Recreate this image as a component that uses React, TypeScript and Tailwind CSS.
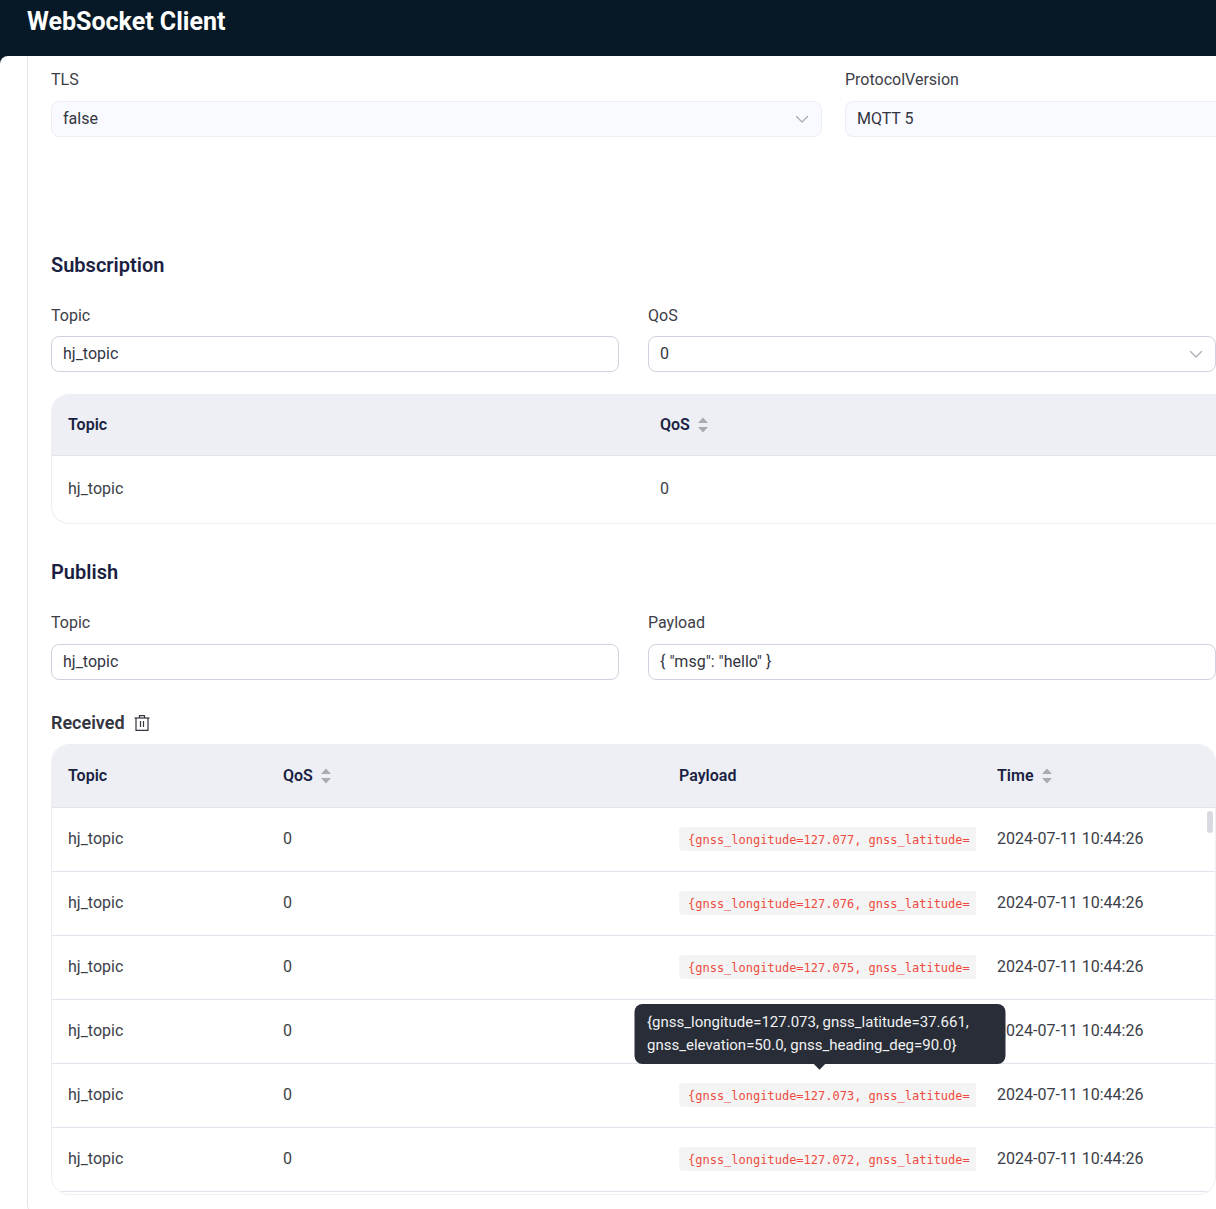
import { useState } from "react";

const subscriptions = [{ topic: "hj_topic", qos: 0 }];

const messages = [
  { id: 1, longitude: "127.077" },
  { id: 2, longitude: "127.076" },
  { id: 3, longitude: "127.075" },
  { id: 4, longitude: "" },
  { id: 5, longitude: "127.073" },
  { id: 6, longitude: "127.072" },
];

const inputClass =
  "block w-full h-9 border border-[#d0d3dd] rounded-lg bg-white px-[11px] text-base text-[#33353f] focus:outline-none";
const labelClass = "block text-base leading-6 text-[#3c3e47]";
const headingClass = "text-xl leading-7 font-semibold text-[#1b1f42]";
const thClass = "px-4 text-left font-semibold text-[#1b1f42]";

function Chevron() {
  return (
    <svg
      viewBox="0 0 14 14"
      className="pointer-events-none absolute right-[13px] top-[11px] h-[14px] w-[14px]"
      fill="none"
      stroke="#a9abb3"
      strokeWidth="1.2"
      strokeLinecap="round"
      strokeLinejoin="round"
    >
      <path d="M1.5 4.5 7 10l5.5-5.5" />
    </svg>
  );
}

function SortHeader({ label }: { label: string }) {
  return (
    <button type="button" className="flex items-center gap-2 font-semibold">
      {label}
      <svg viewBox="0 0 10 16" className="h-4 w-[10px]" fill="#a8abb2">
        <path d="M5 0.5 10 6H0z" />
        <path d="M5 15.5 0 10h10z" />
      </svg>
    </button>
  );
}

function TrashIcon() {
  return (
    <svg
      viewBox="0 0 16 16"
      className="h-4 w-4"
      fill="none"
      stroke="#33353f"
      strokeWidth="1.2"
    >
      <path d="M0.5 3h15" />
      <path d="M5.5 3V0.6h5V3" />
      <path d="M2 3v12.4h12V3" />
      <path d="M6.5 6v6M9.5 6v6" />
    </svg>
  );
}

export default function App() {
  const [tls, setTls] = useState("false");
  const [version, setVersion] = useState("MQTT 5");
  const [subTopic, setSubTopic] = useState("hj_topic");
  const [subQos, setSubQos] = useState("0");
  const [pubTopic, setPubTopic] = useState("hj_topic");
  const [payload, setPayload] = useState('{ "msg": "hello" }');
  const activeId = 5;

  return (
    <div className="flex h-screen flex-col overflow-hidden bg-[#071926] font-['Roboto','Liberation_Sans',sans-serif] text-base text-[#3c3e47]">
      <header className="h-14 shrink-0 px-[27px] pt-[6px]">
        <h1 className="text-[25px] leading-8 font-bold text-white">WebSocket Client</h1>
      </header>

      <main className="min-h-0 flex-1 overflow-hidden rounded-tl-lg bg-white pl-[27px]">
        <section className="rounded-bl-xl border-b border-l border-[#e3e3ee] pb-5 pl-[23px]">
          <div className="grid grid-cols-[771fr_371fr] gap-x-[23px] pt-3">
            <div>
              <label htmlFor="tls" className={labelClass}>
                TLS
              </label>
              <div className="relative mt-[9px]">
                <select
                  id="tls"
                  value={tls}
                  onChange={(e) => setTls(e.target.value)}
                  className="block h-9 w-full appearance-none rounded-lg border border-[#ededf5] bg-[#f9faff] px-[11px] text-[#33353f]"
                >
                  <option>false</option>
                  <option>true</option>
                </select>
                <Chevron />
              </div>
            </div>
            <div>
              <label htmlFor="version" className={labelClass}>
                ProtocolVersion
              </label>
              <select
                id="version"
                value={version}
                onChange={(e) => setVersion(e.target.value)}
                className="mt-[9px] block h-9 w-full appearance-none rounded-l-lg border border-r-0 border-[#ededf5] bg-[#f9faff] px-[11px] text-[#33353f]"
              >
                <option>MQTT 5</option>
                <option>MQTT 3.1.1</option>
              </select>
            </div>
          </div>

          <h2 className={`mt-[114px] ${headingClass}`}>Subscription</h2>
          <div className="mt-[25px] grid grid-cols-2 gap-x-[29px]">
            <div>
              <label htmlFor="sub-topic" className={labelClass}>
                Topic
              </label>
              <input
                id="sub-topic"
                type="text"
                value={subTopic}
                onChange={(e) => setSubTopic(e.target.value)}
                className={`mt-2 pb-[2px] ${inputClass}`}
              />
            </div>
            <div>
              <label htmlFor="sub-qos" className={labelClass}>
                QoS
              </label>
              <div className="relative mt-2">
                <select
                  id="sub-qos"
                  value={subQos}
                  onChange={(e) => setSubQos(e.target.value)}
                  className={`appearance-none ${inputClass}`}
                >
                  <option>0</option>
                  <option>1</option>
                  <option>2</option>
                </select>
                <Chevron />
              </div>
            </div>
          </div>

          <div className="mt-[22px] overflow-hidden rounded-l-[18px] border border-r-0 border-[#edeff5]">
            <table className="w-full table-fixed">
              <thead>
                <tr className="h-[60px] border-b border-[#e3e3ee] bg-[#edeff5]">
                  <th className={`w-[592px] ${thClass}`}>Topic</th>
                  <th className={thClass}>
                    <SortHeader label="QoS" />
                  </th>
                </tr>
              </thead>
              <tbody>
                {subscriptions.map((s) => (
                  <tr key={s.topic} className="h-[68px]">
                    <td className="px-4">{s.topic}</td>
                    <td className="px-4">{s.qos}</td>
                  </tr>
                ))}
              </tbody>
            </table>
          </div>

          <h2 className={`mt-[34px] ${headingClass}`}>Publish</h2>
          <div className="mt-[25px] grid grid-cols-2 gap-x-[29px]">
            <div>
              <label htmlFor="pub-topic" className={labelClass}>
                Topic
              </label>
              <input
                id="pub-topic"
                type="text"
                value={pubTopic}
                onChange={(e) => setPubTopic(e.target.value)}
                className={`mt-[9px] pb-[2px] ${inputClass}`}
              />
            </div>
            <div>
              <label htmlFor="payload" className={labelClass}>
                Payload
              </label>
              <input
                id="payload"
                type="text"
                value={payload}
                onChange={(e) => setPayload(e.target.value)}
                className={`mt-[9px] pb-[2px] ${inputClass}`}
              />
            </div>
          </div>

          <div className="mt-[29px] flex items-center gap-[9px]">
            <h3 className="text-lg leading-7 font-semibold text-[#33353f]">Received</h3>
            <button type="button" aria-label="Clear messages">
              <TrashIcon />
            </button>
          </div>

          <div className="relative mt-[7px] overflow-hidden rounded-[18px] border border-[#edeff5] pb-[2px]">
            <table className="w-full table-fixed">
              <thead>
                <tr className="h-[62px] border-b border-[#e3e3ee] bg-[#edeff5]">
                  <th className={`w-[215px] ${thClass}`}>Topic</th>
                  <th className={`w-[396px] ${thClass}`}>
                    <SortHeader label="QoS" />
                  </th>
                  <th className={`w-[318px] ${thClass}`}>Payload</th>
                  <th className={thClass}>
                    <SortHeader label="Time" />
                  </th>
                </tr>
              </thead>
              <tbody>
                {messages.map((m) => (
                  <tr key={m.id} className="h-16 border-b border-[#e3e3ee]">
                    <td className="px-4">hj_topic</td>
                    <td className="px-4">0</td>
                    <td className="pl-4 pr-[21px]">
                      <div className="relative">
                        {m.longitude && (
                          <code className="-mr-4 block h-6 overflow-hidden rounded-l bg-[#f4f4f4] pl-[9px] font-['DejaVu_Sans_Mono',monospace] text-xs leading-[26px] whitespace-nowrap text-[#ee4b3e]">
                            {`{gnss_longitude=${m.longitude}, gnss_latitude=`}
                          </code>
                        )}
                        {m.id === activeId && (
                          <div
                            role="tooltip"
                            className="absolute bottom-full left-1/2 z-10 mb-[19px] w-[371px] -translate-x-1/2 rounded-lg bg-[#282d37] px-[13px] py-[7px] text-[15px] leading-[23px] text-[#f0f1f3]"
                          >
                            {`{gnss_longitude=${m.longitude}, gnss_latitude=37.661, gnss_elevation=50.0, gnss_heading_deg=90.0}`}
                            <span className="absolute -bottom-1 left-1/2 h-2 w-2 -translate-x-1/2 rotate-45 bg-[#282d37]" />
                          </div>
                        )}
                      </div>
                    </td>
                    <td className="px-4">2024-07-11 10:44:26</td>
                  </tr>
                ))}
              </tbody>
            </table>
            <div className="absolute right-[2px] top-[66px] h-[22px] w-[6px] rounded-full bg-[#d9dadf]" />
          </div>
        </section>
      </main>
    </div>
  );
}
